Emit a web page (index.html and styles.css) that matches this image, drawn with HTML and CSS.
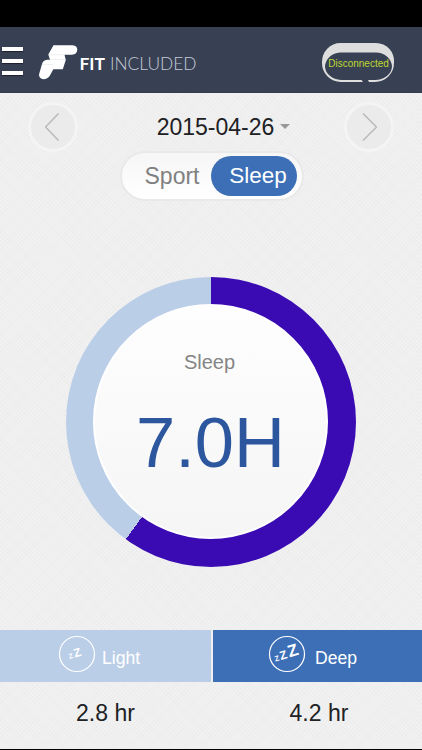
FILE: index.html
```
<!DOCTYPE html>
<html lang="en">
<head>
    <meta charset="UTF-8">
    <meta name="viewport" content="width=device-width, initial-scale=1.0">
    <title>Fit Included</title>
    <link rel="stylesheet" href="styles.css">
</head>
<body>
    <div class="status-bar"></div>
    <header class="header">
        <button class="menu" aria-label="Menu">
            <span></span>
            <span></span>
            <span></span>
        </button>
        <svg class="logo" width="160" height="36" viewBox="0 0 160 36">
            <path fill="#fff" d="M14.500 1.200H33.500Q38.300 1.500 38.300 5.800Q37.800 10.600 33 10.800H25.500L26.800 16L23.800 25.300H14.300L10.800 31.800Q8.500 35.200 4.500 35.200Q0 34.800 0 30.500L3 20Q4.200 16 8 15.700H11L9.300 10.500Z"/>
            <path fill="none" stroke="#dcdfe5" stroke-width=".5" d="M10 10.700H26M11 15.500H26M3 20.500H14"/>
            <text class="logo-bold" x="40.500" y="26" textLength="25.500" lengthAdjust="spacingAndGlyphs">FIT</text>
            <text class="logo-thin" x="71" y="26" textLength="86.500" lengthAdjust="spacingAndGlyphs">INCLUDED</text>
        </svg>
        <div class="device">
            <svg class="device-band" width="74" height="41" viewBox="0 0 74 41">
                <path fill="#dedede" fill-rule="evenodd" d="M19.500 0H55A18 18 0 0 1 73 19.500A19 19 0 0 1 54 39H48L47 37H54A17 14 0 0 0 71 23.500A16 15 0 0 0 55 9.500H19A16 15 0 0 0 4 23.500A17 14 0 0 0 20 37H40.500L42 39H20A19 19 0 0 1 1 19.500A18.500 19 0 0 1 19.500 0Z"/>
            </svg>
            <span class="device-status">Disconnected</span>
        </div>
    </header>

    <main class="content">
        <div class="date-row">
            <button class="arrow" aria-label="Previous day">
                <svg width="16" height="30" viewBox="0 0 16 30"><path d="M13.500 1.500L.5 15L13.500 28.500"/></svg>
            </button>
            <div class="date">2015-04-26<span class="caret"></span></div>
            <button class="arrow" aria-label="Next day">
                <svg width="16" height="30" viewBox="0 0 16 30"><path d="M2 1.500L15.500 15L2 28.500"/></svg>
            </button>
        </div>

        <div class="switch">
            <button class="switch-item">Sport</button>
            <button class="switch-item active">Sleep</button>
        </div>

        <div class="ring">
            <div class="ring-inner">
                <div class="ring-label">Sleep</div>
                <div class="ring-value">7.0H</div>
            </div>
        </div>
    </main>

    <footer class="summary">
        <div class="tab light">
            <svg class="zzz" width="38" height="38" viewBox="0 0 38 38">
                <circle cx="19" cy="19" r="17.500"/>
                <text x="11.500" y="24" font-size="7" transform="rotate(-17 11.500 24)">Z</text>
                <text x="17" y="22.500" font-size="12" transform="rotate(-17 17 22.500)">Z</text>
            </svg>
            <span>Light</span>
        </div>
        <div class="tab deep">
            <svg class="zzz" width="38" height="38" viewBox="0 0 38 38">
                <circle cx="19" cy="19" r="17.500"/>
                <text x="7.500" y="26.500" font-size="7.500" transform="rotate(-17 7.500 26.500)">Z</text>
                <text x="13" y="25" font-size="12" transform="rotate(-17 13 25)">Z</text>
                <text x="21.500" y="22.500" font-size="17" transform="rotate(-17 21.500 22.500)">Z</text>
            </svg>
            <span>Deep</span>
        </div>
        <div class="hours hours-light">2.8 hr</div>
        <div class="hours hours-deep">4.2 hr</div>
    </footer>
</body>
</html>
```

FILE: styles.css
```
* {
    box-sizing: border-box;
    margin: 0;
    padding: 0;
}

body {
    width: 422px;
    height: 750px;
    display: flex;
    flex-direction: column;
    overflow: hidden;
    font-family: "Liberation Sans", Arial, sans-serif;
    color: #202124;
    background-color: #f1f1f1;
    /* fine woven texture */
    background-image:
        repeating-linear-gradient(45deg, rgba(0,0,0,0.012) 0 1px, transparent 1px 3px),
        repeating-linear-gradient(-45deg, rgba(0,0,0,0.012) 0 1px, transparent 1px 3px);
    border-bottom: 1px solid #000;
}

button {
    border: none;
    background: none;
    font: inherit;
    cursor: pointer;
}

.status-bar {
    height: 27px;
    background-color: #000;
}

/* Header */
.header {
    height: 66px;
    display: flex;
    align-items: flex-start;
    background-color: #384154;
    border-bottom: 1px solid #343c4e;
}

.menu {
    width: 21px;
    margin: 20px 18px 0 2px;
    display: flex;
    flex-direction: column;
    gap: 8px;
}

.menu span {
    height: 4px;
    background-color: #fff;
    box-shadow: 0 1px 1px rgba(0,0,0,0.5);
}

.logo {
    margin-top: 17px;
    margin-left: -2px;
}

.logo text {
    font-family: Lato, sans-serif;
    font-size: 17px;
}

.logo .logo-bold {
    font-weight: 700;
    fill: #fff;
}

.logo .logo-thin {
    font-weight: 300;
    fill: #c5cad8;
}

.device {
    display: grid;
    place-items: center;
    margin: 16px 27px 0 auto;
    width: 74px;
    height: 41px;
}

.device-band,
.device-status {
    grid-area: 1 / 1;
}

.device-status {
    padding-left: 1px;
    font-size: 10px;
    color: #bfd730;
}

/* Date and mode */
.content {
    flex: 1;
    display: flex;
    flex-direction: column;
    align-items: center;
}

.date-row {
    width: 100%;
    height: 58px;
    padding: 9px 28px 0;
    display: flex;
    justify-content: space-between;
}

.arrow {
    width: 50px;
    height: 50px;
    border: 3px solid #f4f4f4;
    border-radius: 50%;
    background-color: #ebebeb;
    display: flex;
    align-items: center;
    justify-content: center;
}

.arrow path {
    fill: none;
    stroke: #b9b9b9;
    stroke-width: 1.5;
}

.date {
    display: flex;
    align-items: center;
    height: 50px;
    padding-left: 25px;
    font-size: 23px;
}

.caret {
    margin: 0 0 1px 6px;
    border: 5px solid transparent;
    border-top: 5px solid #999;
    border-bottom: none;
}

.switch {
    width: 184px;
    height: 50px;
    padding: 3px 5px 3px 3px;
    border: 2px solid #e9e9e9;
    border-radius: 25px;
    background: linear-gradient(#f6f6f6, #fff);
    display: flex;
    align-items: center;
    margin-left: 2px;
}

.switch-item {
    flex: 1;
    height: 40px;
    padding-left: 8px;
    border-radius: 20px;
    font-size: 23px;
    color: #808080;
}

.switch-item.active {
    background-color: #3d6fb7;
    color: #fff;
    font-size: 22.5px;
}

/* Sleep ring */
.ring {
    width: 290px;
    height: 290px;
    padding: 27px;
    margin-top: 76px;
    border-radius: 50%;
    background: conic-gradient(#3a0bb3 0 60%, #bbcee7 60% 100%);
}

.ring-inner {
    width: 235px;
    height: 235px;
    border: 2px solid #fff;
    border-radius: 50%;
    background: linear-gradient(#fefefe, #f5f5f5);
    text-align: center;
}

.ring-label {
    padding-top: 44px;
    padding-right: 2px;
    font-size: 20px;
    line-height: 24px;
    color: #858585;
}

.ring-value {
    margin-top: 29px;
    font-size: 70.5px;
    line-height: 80px;
    color: #2c569d;
}

/* Light and deep totals */
.summary {
    display: grid;
    grid-template-columns: 211px 209px;
    grid-template-rows: 52px 67px;
    column-gap: 2px;
}

.tab {
    display: flex;
    align-items: flex-start;
    font-size: 17.6px;
    color: #fff;
}

.light {
    padding: 5px 0 0 58px;
    background-color: #bbcee7;
}

.deep {
    padding: 5px 0 0 55px;
    background-color: #3d6fb7;
}

.tab span {
    margin: 13px 0 0 6px;
}

.deep span {
    margin-left: 9px;
}

.zzz circle {
    fill: none;
    stroke: #fff;
    stroke-width: 1.2;
}

.zzz text {
    font-weight: 700;
    fill: #fff;
}

.hours {
    padding-top: 17px;
    font-size: 23px;
    line-height: 28px;
    text-align: center;
}

.hours-deep {
    padding-left: 3px;
}
```
